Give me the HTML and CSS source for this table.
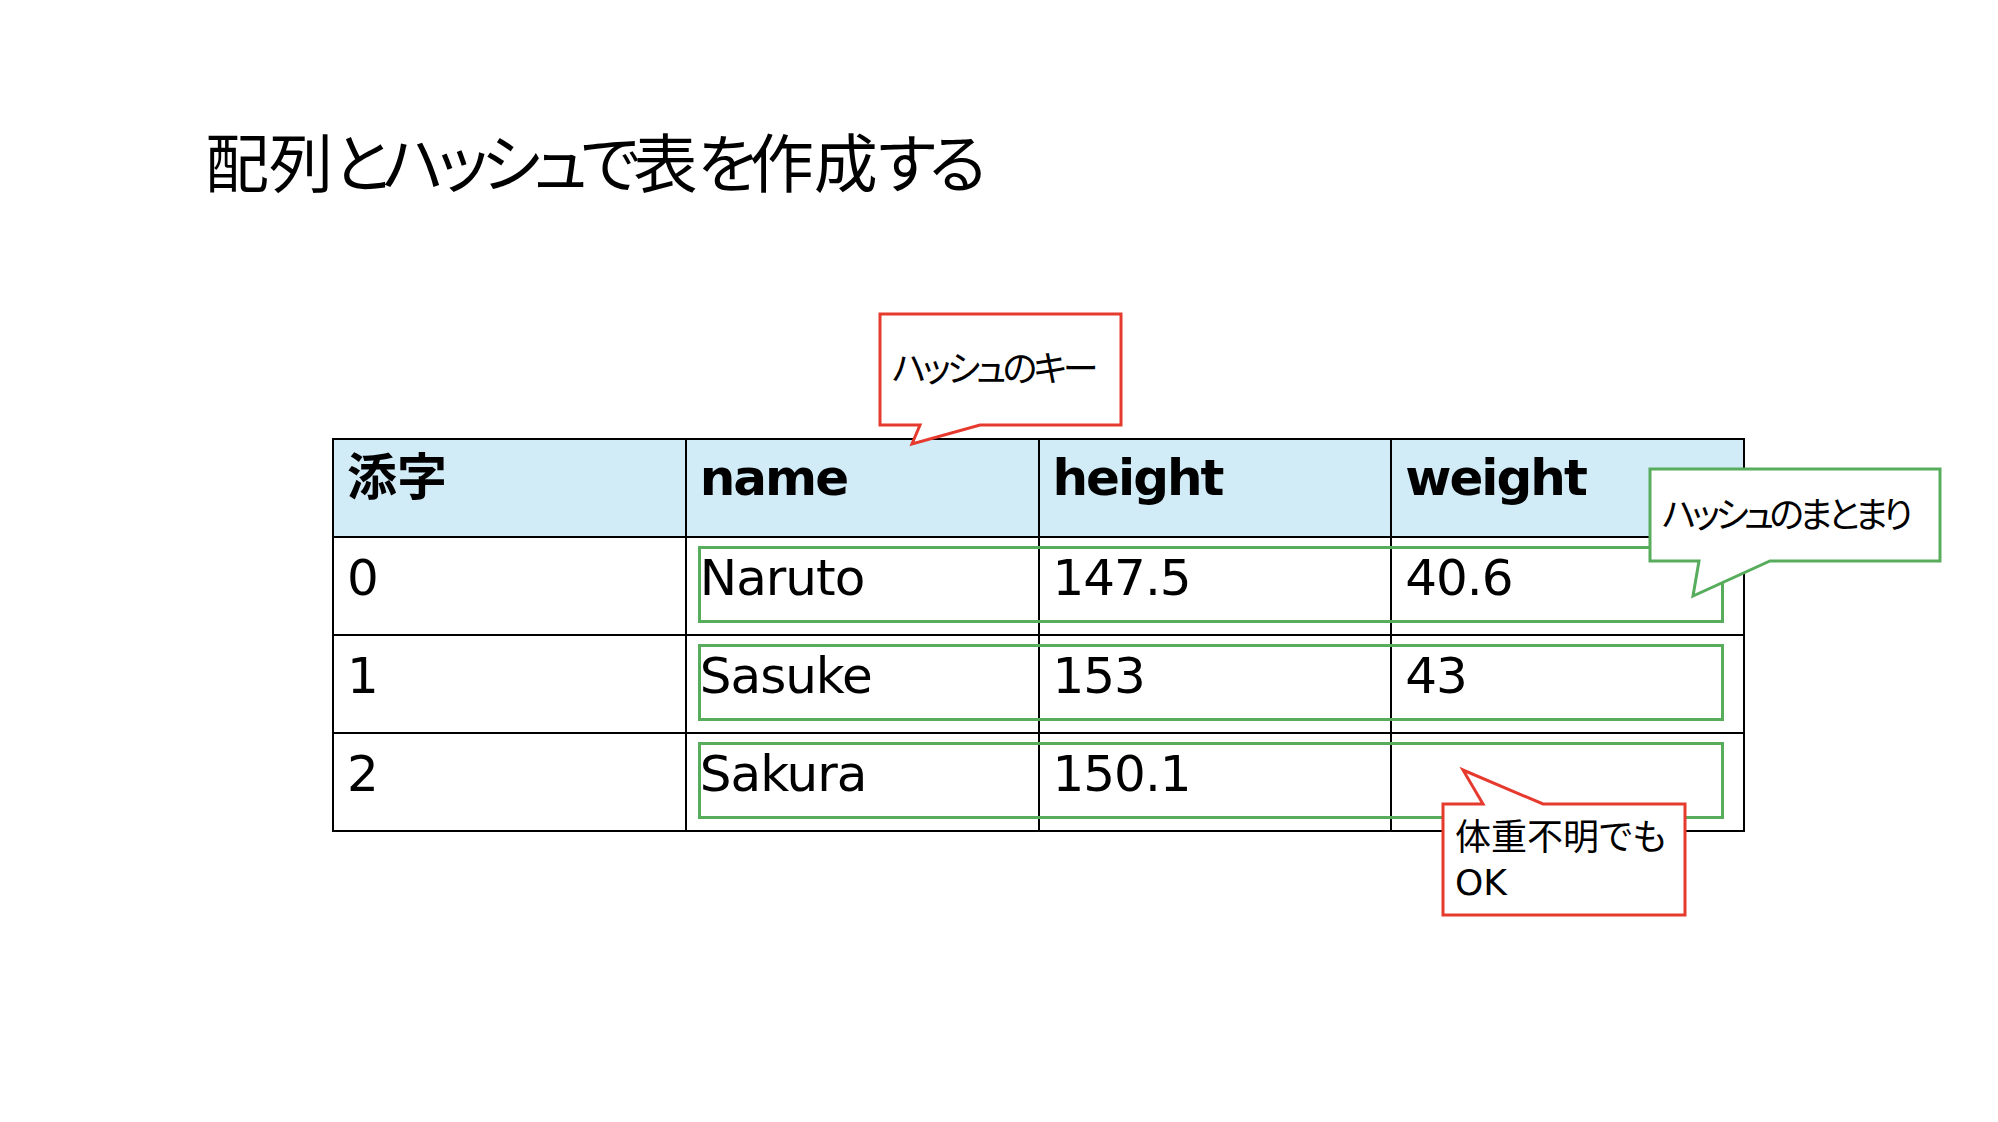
FILE: index.html
```html
<!DOCTYPE html>
<html lang="ja">
<head>
<meta charset="utf-8">
<title>配列とハッシュで表を作成する</title>
<link rel="stylesheet" href="styles.css">
</head>
<body>
<div class="slide">
  <h1 class="title">配列<span class="kana">とハッシュで</span>表<span class="kana">を</span>作成<span class="kana">する</span></h1>

  <div class="table-wrap">
    <table class="data">
      <thead>
        <tr><th><span class="ja">添字</span></th><th>name</th><th>height</th><th>weight</th></tr>
      </thead>
      <tbody>
        <tr><td>0</td><td>Naruto</td><td>147.5</td><td>40.6</td></tr>
        <tr><td>1</td><td>Sasuke</td><td>153</td><td>43</td></tr>
        <tr><td>2</td><td>Sakura</td><td>150.1</td><td></td></tr>
      </tbody>
    </table>
    <div class="group group-0"></div>
    <div class="group group-1"></div>
    <div class="group group-2"></div>
  </div>

  <div class="callout callout-key">
    <svg class="callout-shape" width="241" height="111" viewBox="0 0 241 111">
      <polygon class="shape-red" points="0,0 241,0 241,111 100,111 32,130 40,111 0,111"/>
    </svg>
    <span class="callout-text tight">ハッシュのキー</span>
  </div>

  <div class="callout callout-group">
    <svg class="callout-shape" width="290" height="92" viewBox="0 0 290 92">
      <polygon class="shape-green" points="0,0 290,0 290,92 120,92 43,127 49,92 0,92"/>
    </svg>
    <span class="callout-text tighter">ハッシュのまとまり</span>
  </div>

  <div class="callout callout-missing">
    <svg class="callout-shape" width="242" height="111" viewBox="0 0 242 111">
      <polygon class="shape-red" points="0,0 40,0 20,-34 100,0 242,0 242,111 0,111"/>
    </svg>
    <span class="callout-text">体重不明でも<br>OK</span>
  </div>
</div>
</body>
</html>
```

FILE: styles.css
```css
html, body {
  margin: 0;
  padding: 0;
  background: #ffffff;
}

body {
  width: 1998px;
  height: 1122px;
  overflow: hidden;
  font-family: "DejaVu Sans", "Noto Sans CJK JP", sans-serif;
  color: #000000;
}

.slide {
  position: relative;
  width: 1998px;
  height: 1122px;
  padding-top: 127px;
  box-sizing: border-box;
}

.title {
  margin: 0 0 0 205px;
  font-family: "Noto Sans CJK JP", sans-serif;
  font-weight: 400;
  font-size: 64px;
  line-height: 64px;
  font-feature-settings: "palt";
  white-space: nowrap;
}

.title .kana {
  letter-spacing: -6.7px;
}

.table-wrap {
  position: relative;
  width: 1413px;
  margin: 247px 0 0 332px;
}

.data {
  width: 1413px;
  border-collapse: collapse;
  table-layout: fixed;
}

.data tr {
  height: 98px;
}

.data th,
.data td {
  width: 25%;
  border: 2px solid #000000;
  padding: 10px 0 0 13px;
  vertical-align: top;
  text-align: left;
  font-size: 50px;
  line-height: 60px;
  white-space: nowrap;
}

.data th {
  background: #d1ebf7;
  font-weight: 700;
  letter-spacing: -2px;
  padding-top: 8px;
}

.data td {
  font-weight: 400;
  letter-spacing: -1px;
}

.ja {
  line-height: 40px;
  letter-spacing: 0;
}

.group {
  position: absolute;
  left: 366px;
  width: 1026px;
  height: 77px;
  border: 3px solid #58ad5c;
  box-sizing: border-box;
}

.group-0 { top: 108px; }
.group-1 { top: 206px; }
.group-2 { top: 304px; }

.callout {
  position: absolute;
  display: flex;
  align-items: center;
  box-sizing: border-box;
  padding-left: 12px;
}

.callout-shape {
  position: absolute;
  left: 0;
  top: 0;
  overflow: visible;
}

.shape-red {
  fill: #ffffff;
  stroke: #e63a2e;
  stroke-width: 3;
  stroke-linejoin: miter;
}

.shape-green {
  fill: #ffffff;
  stroke: #58ad5c;
  stroke-width: 3;
  stroke-linejoin: miter;
}

.callout-text {
  position: relative;
  font-size: 36px;
  line-height: 45px;
  font-feature-settings: "palt";
  white-space: nowrap;
}

.callout-text.tight {
  letter-spacing: -4px;
}

.callout-text.tighter {
  letter-spacing: -4.8px;
}

.callout-key {
  left: 880px;
  top: 314px;
  width: 241px;
  height: 111px;
}

.callout-group {
  left: 1650px;
  top: 469px;
  width: 290px;
  height: 92px;
}

.callout-missing {
  left: 1443px;
  top: 804px;
  width: 242px;
  height: 111px;
}
```
